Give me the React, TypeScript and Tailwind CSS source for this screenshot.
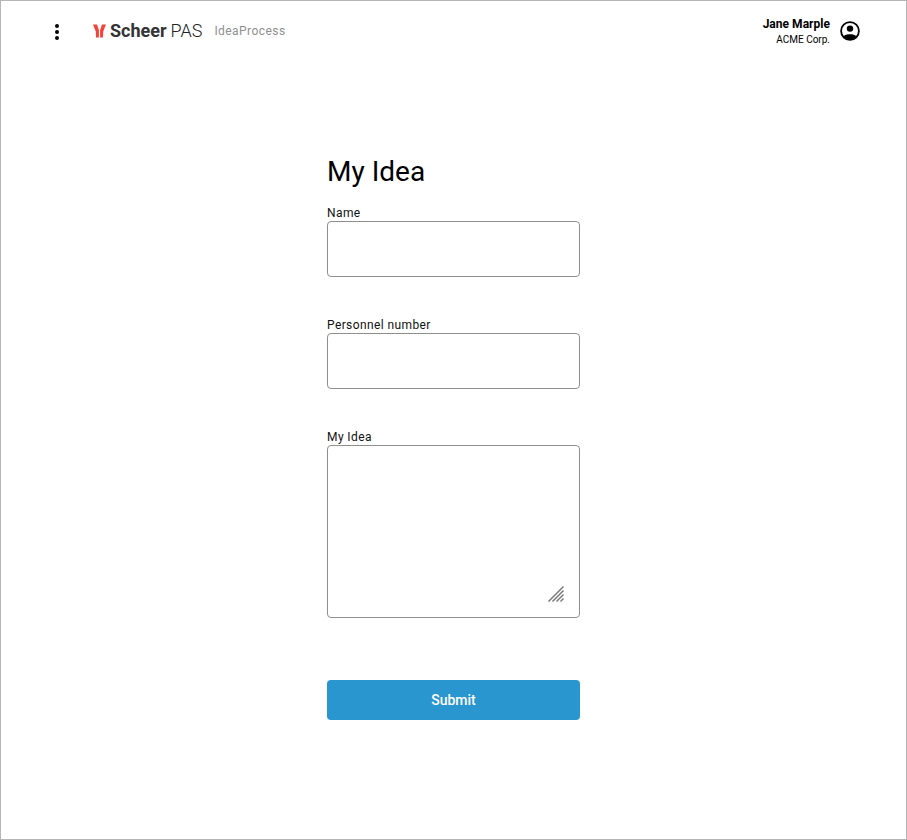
export default function App() {
  const field = "block h-[56px] w-full rounded-[4px] border border-[#8f8f8f] bg-white";
  const label = "block text-[12px] leading-[15px] tracking-[0.4px] text-[#111111]";
  return (
    <div className="flex h-[840px] w-[907px] flex-col border border-[#b5b5b5] bg-white font-['Roboto',sans-serif]">
      <header className="flex h-[60px] items-center justify-between pl-[48px] pr-[46px]">
        <div className="flex items-center">
          <svg width="16" height="18" viewBox="0 0 16 18" className="mb-[-1px]">
            <circle cx="8" cy="3" r="2" fill="#000" />
            <circle cx="8" cy="9" r="2" fill="#000" />
            <circle cx="8" cy="15" r="2" fill="#000" />
          </svg>
          <svg width="13" height="14" viewBox="0 0 13 14" className="ml-[28px]">
            <path d="M0 0.5 L4 0.5 L5.9 6 L5.9 13.5 L3 13.5 L2.8 7.5 Z" fill="#f5433a" />
            <path d="M13 0.5 L9 0.5 L7.1 6 L7.1 13.5 L10 13.5 L10.2 7.5 Z" fill="#f5433a" />
          </svg>
          <span className="ml-[4px] text-[18px] leading-[20px] font-bold text-[#333333]">Scheer</span>
          <span className="ml-[4px] text-[18px] leading-[20px] font-light text-[#222222]">PAS</span>
          <span className="ml-[12px] text-[12px] leading-[14px] tracking-[0.45px] text-[#8f8f8f]">IdeaProcess</span>
        </div>
        <div className="flex items-center gap-[10px]">
          <div className="mt-[2px] flex flex-col items-end">
            <span className="text-[12px] leading-[16px] font-bold tracking-[0.03px] text-black">Jane Marple</span>
            <span className="text-[10px] leading-[16px] font-normal text-black">ACME Corp.</span>
          </div>
          <svg width="20" height="20" viewBox="0 0 20 20" className="mb-[1px]">
            <circle cx="10" cy="10" r="8.9" fill="none" stroke="#000" strokeWidth="1.8" />
            <circle cx="10" cy="7.6" r="3.2" fill="#000" />
            <path d="M3.8 15.2 C5.5 12.6 14.5 12.6 16.2 15.2 C14.5 17.6 12.5 18.4 10 18.4 C7.5 18.4 5.5 17.6 3.8 15.2 Z" fill="#000" />
          </svg>
        </div>
      </header>
      <main className="ml-[326px] flex w-[253px] flex-col pt-[94px]">
        <h1 className="text-[28px] leading-[33px] font-normal text-black">My Idea</h1>
        <label className={`${label} mt-[18px]`}>Name</label>
        <div className={field} />
        <label className={`${label} mt-[41px]`}>Personnel number</label>
        <div className={field} />
        <label className={`${label} mt-[41px]`}>My Idea</label>
        <div className="relative block h-[173px] w-full rounded-[4px] border border-[#8f8f8f] bg-white">
          <svg width="16" height="16" viewBox="0 0 16 16" className="absolute right-[15px] bottom-[15px]" stroke="#777777" strokeWidth="1.4" fill="none">
            <path d="M0.5 15.5 L15.5 0.5" />
            <path d="M4.5 15.5 L15.5 4.5" />
            <path d="M8.5 15.5 L15.5 8.5" />
            <path d="M12.5 15.5 L15.5 12.5" />
          </svg>
        </div>
        <button className="mt-[62px] h-[40px] w-full rounded-[4px] bg-[#2a96cf] text-[14px] font-medium text-white">Submit</button>
      </main>
    </div>
  );
}
